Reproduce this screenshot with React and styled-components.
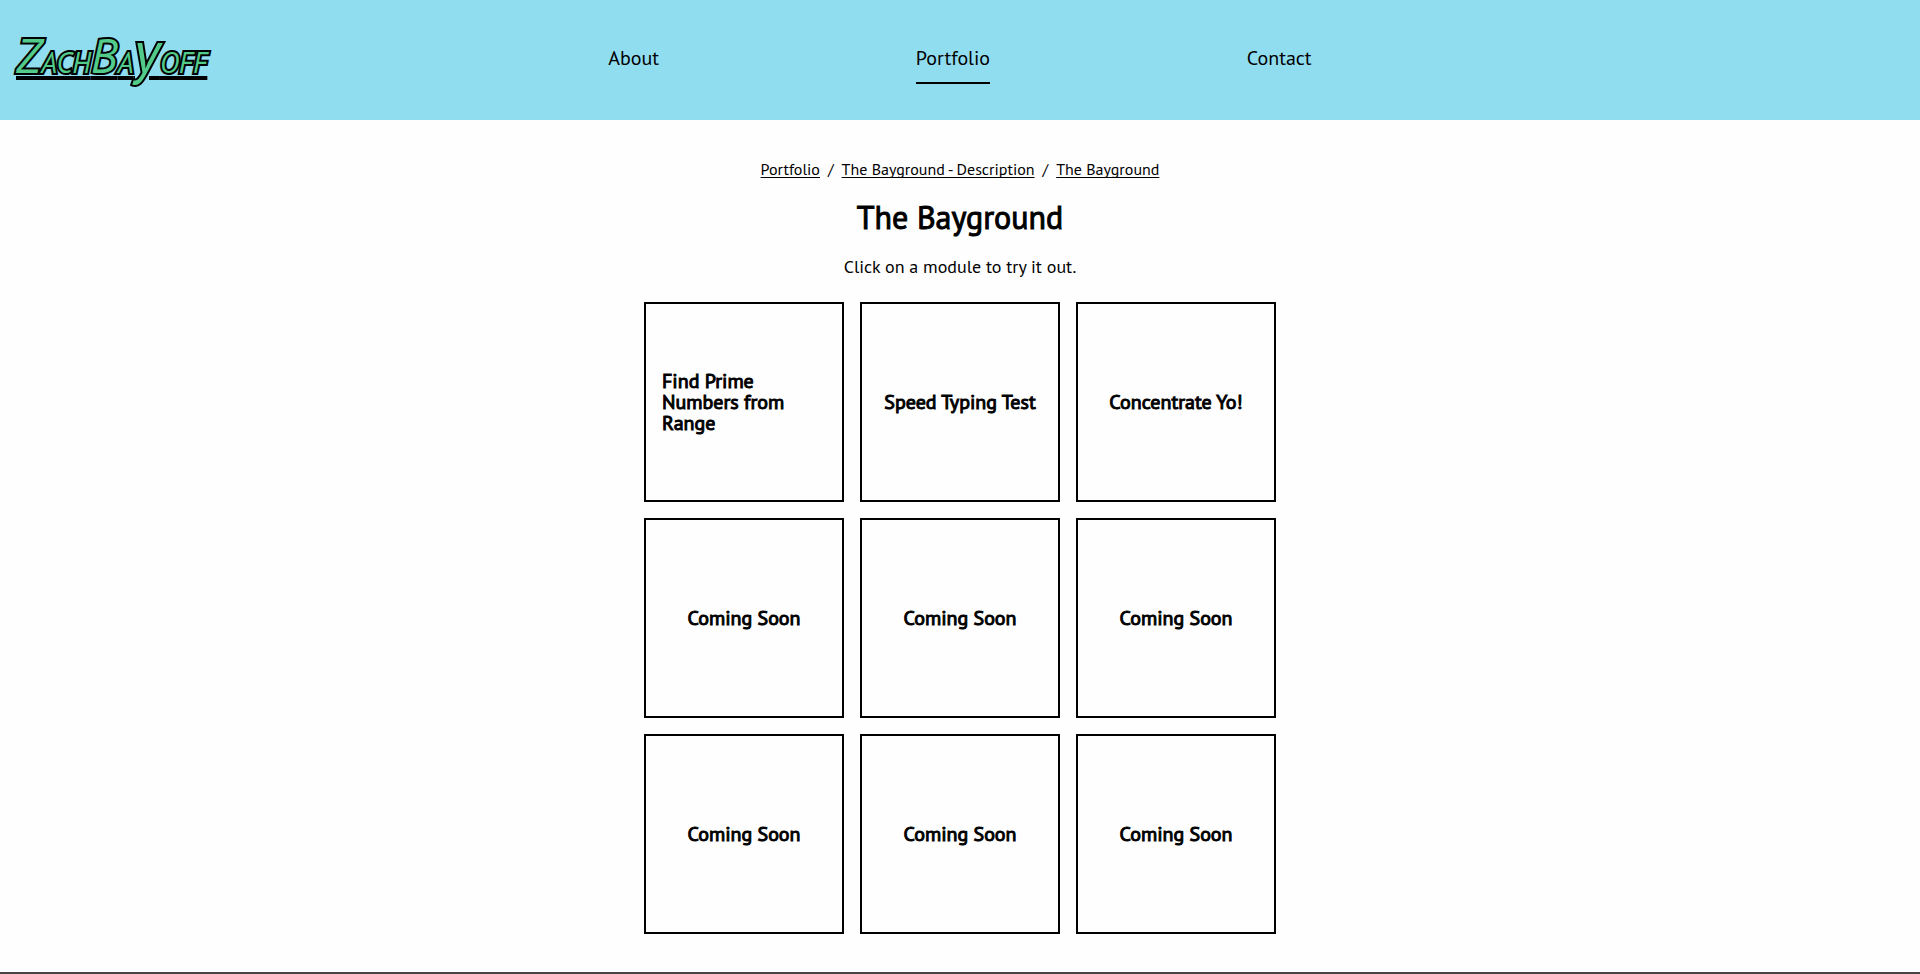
import React from "react";
import styled, { createGlobalStyle, css } from "styled-components";

const GlobalStyle = createGlobalStyle`
  *, *::before, *::after { box-sizing: border-box; }
  body {
    margin: 0;
    background: #fefefe;
    color: #000;
    font-family: "PT Sans", Lato, "Noto Sans", sans-serif;
    font-size: 18px;
  }
  a { color: inherit; }
`;

const heavy = css`
  font-weight: 400;
  -webkit-text-stroke: 1px currentColor;
`;

const Header = styled.header`
  display: grid;
  grid-template-columns: 1fr 2fr 1fr;
  align-items: center;
  min-height: 120px;
  background: #90ddf0;
`;

const Logo = styled.a`
  display: block;
  justify-self: start;
  padding-bottom: 8px;
  margin-left: 16px;
  font-size: 42px;
  line-height: 56px;
  font-weight: 400;
  font-style: italic;
  font-variant-caps: small-caps;
  color: #52ca8a;
  -webkit-text-stroke: 4px #000;
  paint-order: stroke fill;
  text-decoration: underline 4px #000;
  text-underline-offset: 3px;
`;

const Initial = styled.span`
  font-size: 48px;
  line-height: 48px;
`;

const Descender = styled.span`
  font-size: 60px;
  line-height: 48px;
  font-variant-caps: normal;
`;

const Nav = styled.nav`
  display: flex;
  justify-content: space-around;
`;

const NavLink = styled.a`
  padding: 6px 0 8px;
  border-bottom: 2px solid ${({ $active }) => ($active ? "#000" : "transparent")};
  font-size: 20px;
  line-height: 32px;
  text-decoration: none;
`;

const Main = styled.main`
  display: flex;
  flex-direction: column;
  align-items: center;
  padding: 39px 16px 38px;
`;

const Breadcrumbs = styled.ol`
  display: flex;
  flex-wrap: wrap;
  margin: 0;
  padding: 0;
  list-style: none;
  font-size: 16px;
  line-height: 20px;
`;

const Crumb = styled.li`
  & + &::before {
    content: "/";
    margin: 0 8px;
  }
`;

const CrumbLink = styled.a`
  text-underline-offset: 2px;
  text-decoration-skip-ink: none;
`;

const Title = styled.h1`
  margin: 16px 0;
  font-size: 32px;
  line-height: 44px;
  ${heavy}
`;

const Intro = styled.p`
  margin: 0 0 23px;
  line-height: 24px;
`;

const Modules = styled.div`
  display: flex;
  flex-wrap: wrap;
  justify-content: center;
  gap: 16px;
  max-width: 632px;
`;

const Module = styled.button`
  display: flex;
  align-items: center;
  justify-content: center;
  width: 200px;
  height: 200px;
  padding: 16px;
  border: 2px solid #000;
  background: transparent;
  color: inherit;
  font-family: inherit;
  font-size: 20px;
  line-height: 21px;
  text-align: left;
  cursor: pointer;
  ${heavy}
`;

const Footer = styled.footer`
  border-top: 2px solid #444;
`;

const pages = ["About", "Portfolio", "Contact"];
const trail = ["Portfolio", "The Bayground - Description", "The Bayground"];
const modules = [
  "Find Prime Numbers from Range",
  "Speed Typing Test",
  "Concentrate Yo!",
  ...Array(6).fill("Coming Soon"),
];

export default function App() {
  return (
    <>
      <GlobalStyle />
      <Header>
        <Logo href="#home">
          <Initial>Z</Initial>ach<Initial>B</Initial>a<Descender>y</Descender>off
        </Logo>
        <Nav aria-label="Main">
          {pages.map((page) => (
            <NavLink key={page} href={`#${page}`} $active={page === "Portfolio"}>
              {page}
            </NavLink>
          ))}
        </Nav>
      </Header>
      <Main>
        <nav aria-label="Breadcrumb">
          <Breadcrumbs>
            {trail.map((label) => (
              <Crumb key={label}>
                <CrumbLink href="#trail">{label}</CrumbLink>
              </Crumb>
            ))}
          </Breadcrumbs>
        </nav>
        <Title>The Bayground</Title>
        <Intro>Click on a module to try it out.</Intro>
        <Modules>
          {modules.map((name, index) => (
            <Module key={index} type="button">{name}</Module>
          ))}
        </Modules>
      </Main>
      <Footer />
    </>
  );
}
